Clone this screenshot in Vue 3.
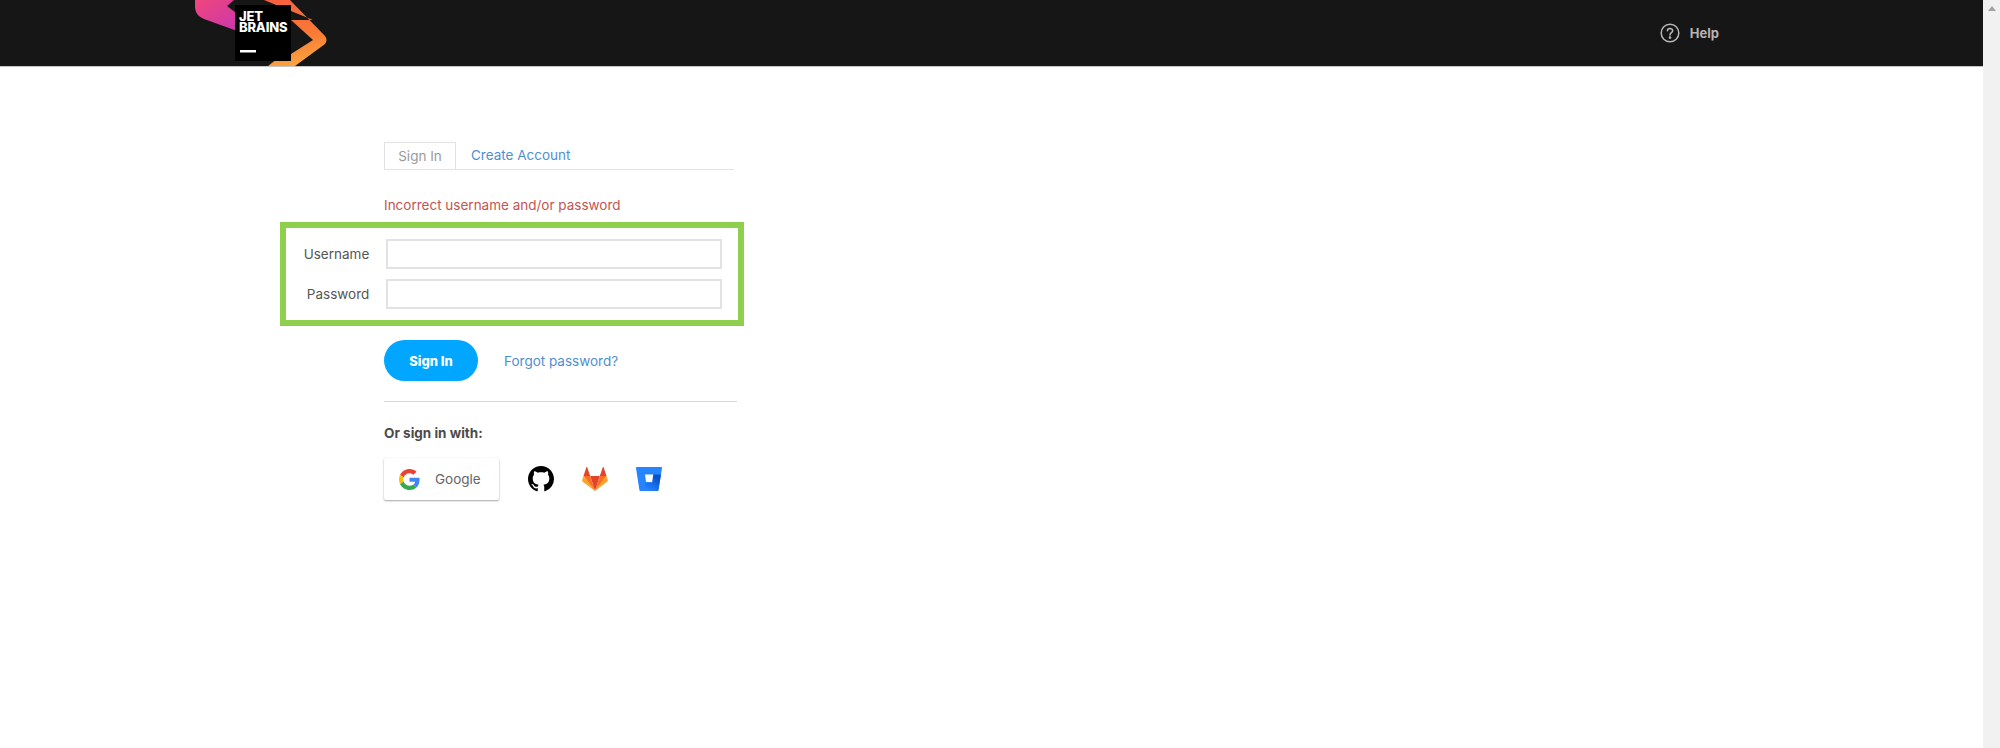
<template>
  <div class="window">
    <div class="page">
      <header class="topbar">
        <svg class="logo" width="140" height="66" viewBox="190 0 140 66">
          <defs>
            <linearGradient id="pink" x1="0" y1="0" x2="1" y2="1">
              <stop offset="0" stop-color="#f0467c" />
              <stop offset="1" stop-color="#c836b0" />
            </linearGradient>
            <linearGradient id="orange" x1="0.2" y1="0" x2="0.4" y2="1">
              <stop offset="0" stop-color="#f8603f" />
              <stop offset="0.6" stop-color="#f97a35" />
              <stop offset="1" stop-color="#fca33f" />
            </linearGradient>
          </defs>
          <path d="M195 0 H234 L227 6 L240 16 V32 L204 19 Q196 16 195 8 Z" fill="url(#pink)" />
          <path d="M264 0 H290 L325 36 Q328 40 325 44 L295 66 H268 L286 52 H291 V20 H313 Z M291 20 L313 40 L291 56 Z" fill="url(#orange)" fill-rule="nonzero" />
          <path d="M291 20 L313 40 L291 54 Z" fill="#161616" />
          <rect x="235" y="5" width="56" height="56" fill="#000" />
          <text x="239" y="21" class="logo-text">JET</text>
          <text x="239" y="31.5" class="logo-text">BRAINS</text>
          <rect x="240" y="50" width="16" height="2.5" fill="#fff" />
        </svg>
        <a class="help">
          <svg width="20" height="20" viewBox="0 0 20 20" fill="none" stroke="#b8b8b8" stroke-width="1.5">
            <circle cx="10" cy="10" r="8.8" />
            <path d="M7.4 7.8 C7.4 4.8 12.7 4.8 12.7 7.8 C12.7 9.8 10 9.6 10 11.9" stroke-linecap="round" />
            <circle cx="10" cy="14.6" r="0.6" fill="#b8b8b8" />
          </svg>
          <span>Help</span>
        </a>
      </header>

      <main class="content">
        <nav class="tabs">
          <span class="tab active">Sign In</span>
          <a class="tab link">Create Account</a>
        </nav>

        <p class="error">Incorrect username and/or password</p>

        <div class="fields">
          <label v-for="field in fields" :key="field" class="field">
            <span class="field-label">{{ field }}</span>
            <input class="field-input" type="text" />
          </label>
        </div>

        <div class="actions">
          <button class="signin">Sign In</button>
          <a class="link forgot">Forgot password?</a>
        </div>

        <div class="divider"></div>

        <div class="other">Or sign in with:</div>

        <div class="providers">
          <button class="google">
            <svg width="21" height="21" viewBox="0 0 48 48">
              <path fill="#ea4335" d="M24 9.5c3.5 0 6.700 1.200 9.200 3.600l6.900-6.900C35.900 2.400 30.500 0 24 0 14.600 0 6.500 5.400 2.600 13.200l8 6.200C12.500 13.600 17.800 9.500 24 9.500z" />
              <path fill="#4285f4" d="M47 24.500c0-1.600-.1-3.100-.4-4.500H24v9h12.900c-.6 3-2.200 5.500-4.700 7.200l7.700 6c4.500-4.200 7.100-10.300 7.100-17.700z" />
              <path fill="#fbbc05" d="M10.600 28.600c-.5-1.400-.8-3-.8-4.600s.3-3.200.8-4.600l-8-6.200C.9 16.500 0 20.100 0 24s.9 7.500 2.600 10.800l8-6.200z" />
              <path fill="#34a853" d="M24 48c6.500 0 11.900-2.100 15.900-5.800l-7.700-6c-2.200 1.400-4.900 2.300-8.200 2.300-6.200 0-11.500-4.200-13.400-9.900l-8 6.200C6.500 42.600 14.600 48 24 48z" />
            </svg>
            <span>Google</span>
          </button>
          <svg class="provider github" width="26" height="26" viewBox="0 0 16 16" fill="#000">
            <path d="M8 0C3.580 0 0 3.580 0 8c0 3.540 2.290 6.530 5.470 7.590.4.070.55-.17.55-.38 0-.19-.01-.82-.01-1.490-2.010.37-2.530-.49-2.690-.94-.09-.23-.48-.94-.82-1.130-.28-.15-.68-.52-.01-.53.63-.01 1.080.58 1.230.82.720 1.210 1.870.87 2.330.66.070-.52.280-.87.510-1.070-1.780-.2-3.640-.89-3.640-3.950 0-.87.310-1.590.820-2.150-.08-.2-.36-1.020.08-2.120 0 0 .67-.21 2.200.82.640-.18 1.320-.27 2-.27s1.360.09 2 .27c1.530-1.040 2.200-.82 2.200-.82.440 1.100.16 1.920.08 2.120.51.560.820 1.270.820 2.150 0 3.070-1.870 3.750-3.650 3.950.290.250.540.730.540 1.480 0 1.070-.01 1.930-.01 2.200 0 .21.150.46.550.38A8.010 8.010 0 0 0 16 8c0-4.420-3.580-8-8-8z" />
          </svg>
          <svg class="provider gitlab" width="26" height="24" viewBox="0 0 26 24">
            <path fill="#e24329" d="M13 24 17.800 9H8.200z" />
            <path fill="#fc6d26" d="M13 24 8.200 9H1.500z" />
            <path fill="#fca326" d="M1.500 9 .1 13.500c-.1.400 0 .9.400 1.100L13 24z" />
            <path fill="#e24329" d="M1.500 9h6.700L5.300.4c-.2-.5-.8-.5-1 0z" />
            <path fill="#fc6d26" d="M13 24 17.800 9h6.700z" />
            <path fill="#fca326" d="M24.500 9 25.900 13.500c.1.400 0 .9-.4 1.100L13 24z" />
            <path fill="#e24329" d="M24.500 9h-6.700L20.700.4c.2-.5.800-.5 1 0z" />
          </svg>
          <svg class="provider" width="26" height="24" viewBox="0 0 26 24">
            <defs>
              <linearGradient id="bucket" x1="0.9" y1="0.3" x2="0.4" y2="1">
                <stop offset="0" stop-color="#0a52cc" />
                <stop offset="1" stop-color="#2684ff" />
              </linearGradient>
            </defs>
            <path fill="#2684ff" d="M.8 0C.3 0 0 .4 0 .9l3.400 22c.1.600.5 1.100 1.100 1.100h17c.4 0 .8-.3.900-.8L26 .9c.1-.5-.3-.9-.8-.9z" />
            <path fill="url(#bucket)" d="M25 7.500H17.400L16.200 16H9.700L5.900 22.800c.3.200 1.200 1.200 1.600 1.200h14c.4 0 .8-.3.900-.8z" />
            <path fill="#fff" d="M9 7.500h8.200L16.100 15H10.100z" />
          </svg>
        </div>
      </main>
    </div>

    <aside class="scrollbar">
      <span class="arrow"></span>
    </aside>
  </div>
</template>

<script setup>
const fields = ['Username', 'Password']
</script>

<style>
html, body { margin: 0; background: #fff; overflow: hidden; }
</style>

<style scoped>
.window {
  display: flex;
  height: 748px;
  overflow: hidden;
  font-family: Inter, "Liberation Sans", sans-serif;
  font-size: 14px;
  color: #4b4b4b;
}
.page { flex: 1; min-width: 0; }

.topbar {
  display: flex;
  justify-content: space-between;
  align-items: center;
  height: 66px;
  padding: 0 264px 0 190px;
  background: #161616;
  border-bottom: 1px solid #c4c4c4;
}
.logo { display: block; }
.logo-text { font: 800 13px Inter, "Liberation Sans", sans-serif; fill: #fff; letter-spacing: -0.2px; }
.help {
  display: flex;
  align-items: center;
  gap: 10px;
  color: #b4b4b4;
  font-size: 13px;
  font-weight: 700;
  margin-bottom: 0;
}

.content {
  width: 350px;
  margin-left: 384px;
  padding-top: 75px;
}

.tabs {
  display: flex;
  height: 27px;
  border-bottom: 1px solid #e2e2e2;
}
.tab { font-size: 13.5px; line-height: 26px; }
.tab.active {
  width: 72px;
  height: 27px;
  box-sizing: border-box;
  text-align: center;
  color: #9a9a9a;
  background: #fff;
  border: 1px solid #e2e2e2;
  border-bottom: 0;
}
.tab.link { margin-left: 15px; }
.link { color: #4f8fd0; }

.error {
  margin: 26px 0 0;
  font-size: 13.5px;
  line-height: 18px;
  color: #c45552;
}

.fields {
  display: flex;
  flex-direction: column;
  gap: 10px;
  width: 464px;
  box-sizing: border-box;
  margin: 8px 0 0 -104px;
  padding: 11px 16px 11px 0;
  border: 6px solid #8fcf4e;
}
.field { display: flex; align-items: center; }
.field-label {
  width: 87px;
  margin-right: 17px;
  margin-left: -6px;
  padding-left: 6px;
  text-align: right;
  font-size: 13.5px;
  color: #555;
}
.field-input {
  width: 350px;
  height: 30px;
  box-sizing: border-box;
  padding: 0 6px;
  border: 2px solid #e2e2e2;
  background: #fff;
  outline: none;
}

.actions {
  display: flex;
  align-items: center;
  gap: 26px;
  margin-top: 14px;
}
.signin {
  width: 94px;
  height: 41px;
  border: 0;
  border-radius: 21px;
  background: #00a6ff;
  color: #fff;
  font: 800 13px Inter, "Liberation Sans", sans-serif;
}
.forgot { font-size: 13.5px; }

.divider {
  width: 353px;
  height: 1px;
  margin-top: 20px;
  background: #d8d8d8;
}

.other {
  margin-top: 23px;
  font-size: 13.5px;
  line-height: 16px;
  font-weight: 700;
  color: #4b4b4b;
}

.providers {
  display: flex;
  align-items: center;
  margin-top: 17px;
}
.google {
  display: flex;
  align-items: center;
  gap: 15px;
  width: 115px;
  height: 42px;
  box-sizing: border-box;
  padding: 0 0 0 15px;
  border: 0;
  border-radius: 2px;
  background: #fff;
  box-shadow: 0 1px 2px rgba(0, 0, 0, 0.35), 0 0 2px rgba(0, 0, 0, 0.06);
  color: #666;
  font: 400 13.5px Inter, "Liberation Sans", sans-serif;
}
.provider { display: block; margin-left: 28px; flex: none; }
.github { margin-left: 29px; }

.scrollbar {
  width: 17px;
  flex: none;
  display: flex;
  justify-content: center;
  background: #f1f1f1;
  padding-top: 6px;
  box-sizing: border-box;
}
.arrow {
  width: 0;
  height: 0;
  border-left: 4px solid transparent;
  border-right: 4px solid transparent;
  border-bottom: 5px solid #a3a3a3;
}
</style>
